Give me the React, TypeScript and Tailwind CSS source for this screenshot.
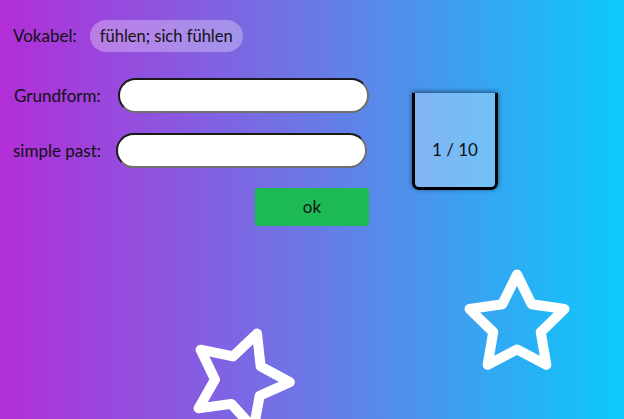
import React from 'react';

function Star({ className }: { className: string }) {
  return (
    <svg
      viewBox="0 0 24 24"
      fill="none"
      stroke="white"
      strokeWidth={2.1}
      strokeLinejoin="round"
      strokeLinecap="round"
      className={className}
    >
      <polygon points="12 2 15.09 8.26 22 9.27 17 14.14 18.18 21.02 12 17.77 5.82 21.02 7 14.14 2 9.27 8.91 8.26 12 2" />
    </svg>
  );
}

export default function App() {
  return (
    <div
      className="relative h-[419px] w-[624px] overflow-hidden bg-[linear-gradient(to_right,#b22ed8,#6b78e6_50%,#0bcafc)] text-[17px] text-[#111]"
      style={{ fontFamily: 'Lato, "Open Sans", sans-serif' }}
    >
      <div className="flex">
        <div className="flex flex-col pl-[13px] pt-[20px]">
          <div className="flex h-[32px] items-center">
            <span>Vokabel:</span>
            <span className="ml-[13px] flex h-[32px] items-center rounded-full bg-white/30 px-[10px] text-[16.5px]">
              fühlen; sich fühlen
            </span>
          </div>

          <div className="mt-[26px] flex items-center">
            <span className="w-[93px] pl-px">Grundform:</span>
            <input
              type="text"
              className="ml-[12px] h-[35px] w-[251px] rounded-full border-2 border-[#6f6f6f] bg-white px-3 outline-none [border-style:inset]"
            />
          </div>

          <div className="mt-[20px] flex items-center">
            <span className="w-[91px]">simple past:</span>
            <input
              type="text"
              className="ml-[12px] h-[35px] w-[251px] rounded-full border-2 border-[#6f6f6f] bg-white px-3 outline-none [border-style:inset]"
            />
          </div>

          <div className="mt-[20px] flex justify-end">
            <button
              type="button"
              className="h-[38px] w-[114px] rounded-[2px] bg-[#1db954] text-[17px] text-[#111]"
            >
              ok
            </button>
          </div>
        </div>

        <div className="ml-[43px] mt-[93px] flex h-[97px] w-[86px] items-center justify-center rounded-b-[7px] border-x-[3px] border-b-[3px] border-black bg-white/30 pt-[20px] shadow-[0_-1px_5px_rgba(0,0,0,0.55)]">
          <span>1 / 10</span>
        </div>
      </div>

      <Star className="absolute left-[460px] top-[265px] h-[114px] w-[114px]" />
      <Star className="absolute left-[183px] top-[321px] h-[114px] w-[114px] origin-[50%_52%] rotate-[20deg]" />
    </div>
  );
}
